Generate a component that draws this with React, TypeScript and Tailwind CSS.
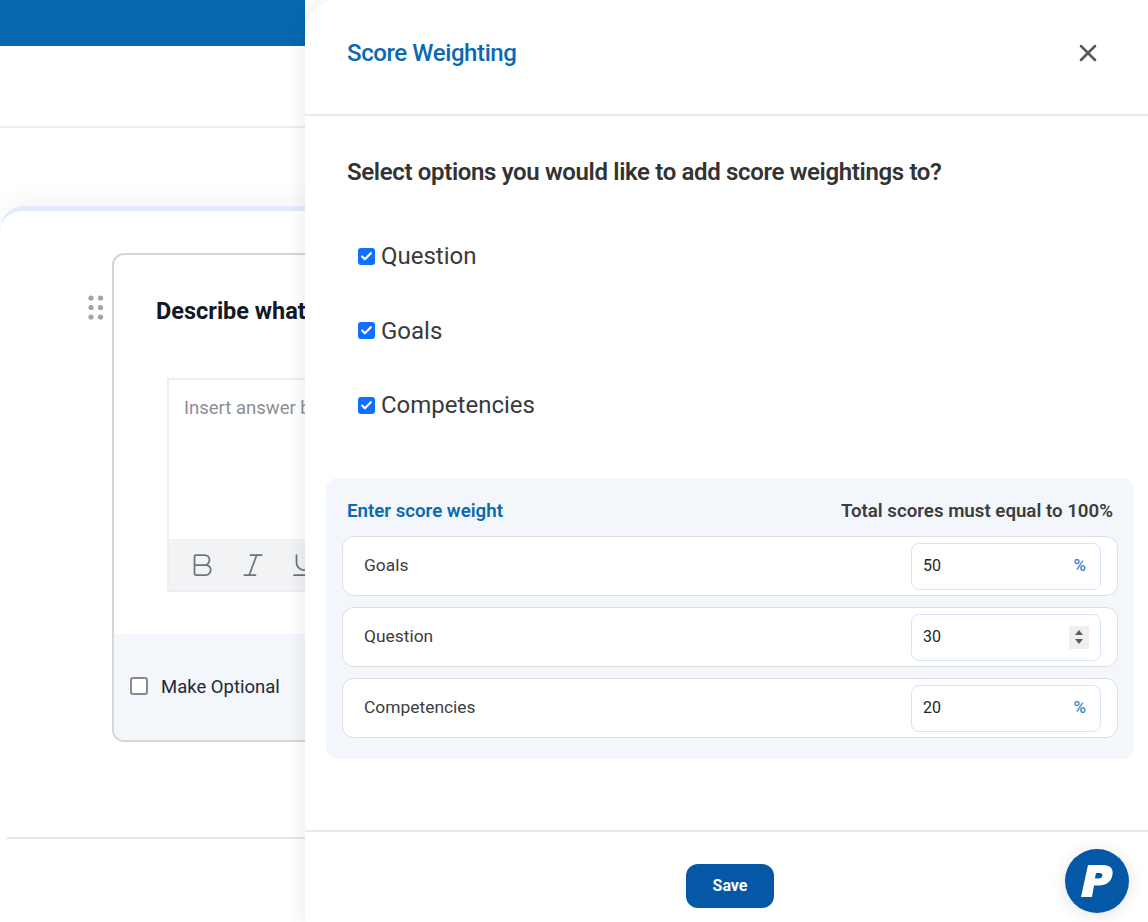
import { Bold, Check, Italic, Underline, X } from "lucide-react";

const options = ["Question", "Goals", "Competencies"];

const weights = [
  { label: "Goals", value: "50", spinner: false },
  { label: "Question", value: "30", spinner: true },
  { label: "Competencies", value: "20", spinner: false },
];

const CheckedBox = () => (
  <span className="flex h-[17px] w-[17px] shrink-0 items-center justify-center rounded-[3px] bg-[#0f6fff]">
    <Check size={13} strokeWidth={4} className="text-white" />
  </span>
);

const DragHandle = () => (
  <svg width="16" height="25" viewBox="0 0 16 25" className="shrink-0 text-[#a3a3a3]" fill="currentColor">
    <circle cx="3" cy="3" r="2.6" />
    <circle cx="12.5" cy="3" r="2.6" />
    <circle cx="3" cy="12.5" r="2.6" />
    <circle cx="12.5" cy="12.5" r="2.6" />
    <circle cx="3" cy="22" r="2.6" />
    <circle cx="12.5" cy="22" r="2.6" />
  </svg>
);

const WeightRow = ({ label, value, spinner }: { label: string; value: string; spinner: boolean }) => (
  <div className="flex h-[60px] items-center justify-between rounded-xl border-[1.5px] border-[#dfdfdf] bg-white pl-[21px] pr-[16px]">
    <span className="mb-[1px] text-[17.4px] text-[#3d3d3d]">{label}</span>
    <div className="flex h-[47px] w-[190px] items-center justify-between rounded-lg border-[1.5px] border-[#d8e4f8] bg-white pl-[11px] pr-[11px]">
      <span className="text-base text-[#262626]">{value}</span>
      {spinner ? (
        <span className="flex h-[23px] w-[20px] flex-col items-center justify-center gap-[4px] bg-[#efefef]">
          <span className="h-0 w-0 border-x-[4.5px] border-b-[5px] border-x-transparent border-b-[#5c5c5c]" />
          <span className="h-0 w-0 border-x-[4.5px] border-t-[5px] border-x-transparent border-t-[#5c5c5c]" />
        </span>
      ) : (
        <span className="mr-[3px] text-[17px] font-medium text-[#3a87cc]">%</span>
      )}
    </div>
  </div>
);

const BackgroundPage = () => (
  <div className="flex h-full w-[305px] shrink-0 flex-col overflow-hidden">
    <div className="h-[46px] shrink-0 bg-[#0768b0]" />
    <div className="h-[82px] shrink-0 border-b-2 border-[#ececf0]" />
    <div className="mt-[78px] flex h-[632px] w-[400px] shrink-0 flex-col rounded-tl-[24px] border-t-[5px] border-[#e2ecfc] shadow-[0_-10px_20px_rgba(0,0,0,0.03)]">
      <div className="flex items-start pl-[88px] pt-[42px]">
        <div className="mt-[42px] mr-[8px]">
          <DragHandle />
        </div>
        <div className="flex h-[489px] w-[400px] shrink-0 flex-col overflow-hidden rounded-xl border-2 border-[#d6d6d6]">
          <div className="h-[379px] shrink-0 pl-[42px] pt-[40px]">
            <p className="text-[23.5px] leading-[32px] font-bold text-[#111827]">Describe what</p>
            <div className="ml-[11px] mt-[51px] flex h-[214px] w-[300px] flex-col border-2 border-[#eeeef2]">
              <div className="h-[159px] shrink-0 pl-[15px] pt-[16px] text-[18.5px] leading-[24px] text-[#8b8e96]">Insert answer below</div>
              <div className="flex flex-1 items-center gap-[21px] bg-[#f2f3f5] pl-[18px] text-[#6b7280]">
                <Bold size={30} strokeWidth={1.4} />
                <Italic size={30} strokeWidth={1.4} />
                <Underline size={30} strokeWidth={1.4} />
              </div>
            </div>
          </div>
          <div className="flex flex-1 items-center gap-[13px] bg-[#f3f6fa] pl-[16px]">
            <span className="-mt-[3px] h-[18px] w-[18px] shrink-0 rounded-[3px] border-2 border-[#8a8a8a] bg-white" />
            <span className="mt-[1px] text-[18.5px] text-[#1f2937]">Make Optional</span>
          </div>
        </div>
      </div>
      <div className="ml-[7px] mt-[95px] border-b-2 border-[#e5e5e5]" />
    </div>
  </div>
);

const ScoreModal = () => (
  <div className="flex h-full min-w-0 flex-1 flex-col rounded-tl-[32px] bg-white shadow-[-6px_0_14px_rgba(0,0,0,0.06)]">
    <div className="flex h-[116px] shrink-0 items-start justify-between border-b-2 border-[#e8e8e8] pl-[42px] pr-[35px]">
      <h2 className="mt-[36px] text-2xl leading-[35px] font-medium tracking-[-0.4px] text-[#0b69b1]">Score Weighting</h2>
      <button className="mt-[38px] flex h-[30px] w-[50px] items-center justify-center rounded-lg bg-white text-[#5a5a5a] shadow-[0_0_3px_rgba(0,0,0,0.04)]">
        <X size={28} strokeWidth={2.2} />
      </button>
    </div>
    <p className="mt-[38px] pl-[42px] text-2xl leading-[36px] font-semibold tracking-[-0.35px] text-[#333333]">
      Select options you would like to add score weightings to?
    </p>
    <div className="mt-[48px] flex flex-col gap-[38.5px] pl-[53px]">
      {options.map((option) => (
        <label key={option} className="flex h-[36px] items-center gap-[6px] text-2xl text-[#3a3a3a]">
          <CheckedBox />
          {option}
        </label>
      ))}
    </div>
    <div className="ml-[21px] mt-[55px] h-[281px] w-[808px] rounded-xl bg-[#f3f6fa] px-[16px]">
      <div className="flex h-[58px] items-start justify-between px-[5px] pt-[20px]">
        <span className="text-[18.7px] leading-[27px] font-semibold text-[#0b69b1]">Enter score weight</span>
        <span className="text-[18.7px] leading-[27px] font-semibold text-[#3d3d3d]">Total scores must equal to 100%</span>
      </div>
      <div className="flex flex-col gap-[11px]">
        {weights.map((w) => (
          <WeightRow key={w.label} {...w} />
        ))}
      </div>
    </div>
    <div className="mt-[71px] flex flex-1 items-start justify-center border-t-2 border-[#e8e8e8] pt-[32px]">
      <button className="ml-[7px] h-[44px] w-[88px] rounded-xl bg-[#0558a6] text-base font-bold text-white">Save</button>
    </div>
  </div>
);

const ChatBubble = () => (
  <div className="absolute right-[19px] bottom-[9px] flex h-[64px] w-[64px] items-center justify-center rounded-full bg-[#0558a6] shadow-[0_2px_16px_rgba(0,0,0,0.12)]">
    <svg width="34" height="36" viewBox="0 0 34 36" fill="white">
      <path
        fillRule="evenodd"
        d="M8 2h15c7 0 10.500 3.500 9.500 9.500C31.300 19 26 22.500 19 22.500h-5L12 34H1L8 2Zm8 8-1.100 5.500h3.600c2.200 0 3.600-1 3.900-2.800.3-1.700-.7-2.700-2.800-2.700H16Z"
      />
    </svg>
  </div>
);

export default function App() {
  return (
    <div className="relative flex h-[922px] w-[1148px] overflow-hidden bg-white font-['Roboto',sans-serif]">
      <BackgroundPage />
      <ScoreModal />
      <ChatBubble />
    </div>
  );
}
